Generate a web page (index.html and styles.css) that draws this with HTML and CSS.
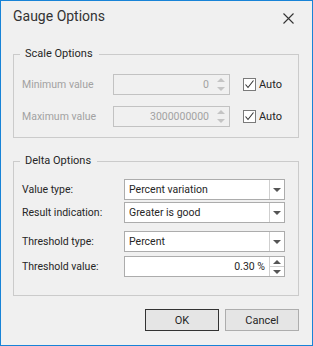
FILE: index.html
```html
<!DOCTYPE html>
<html lang="en">
<head>
    <meta charset="UTF-8">
    <title>Gauge Options</title>
    <link rel="stylesheet" href="styles.css">
</head>
<body>
    <div class="dialog">
        <div class="titlebar">
            <span class="title">Gauge Options</span>
            <svg class="close" width="11" height="11" viewBox="0 0 11 11">
                <path d="M0.5 0.5 L10.5 10.5 M10.5 0.5 L0.5 10.5" stroke="#333" stroke-width="1.1" fill="none"/>
            </svg>
        </div>

        <fieldset class="group">
            <legend>Scale Options</legend>
            <div class="scale-row">
                <span class="row-label disabled">Minimum value</span>
                <div class="spin-edit disabled">
                    <span class="value">0</span>
                    <span class="spin"><i class="tri-up"></i><i class="tri-down"></i></span>
                </div>
                <label class="check"><span class="box"><svg width="11" height="11" viewBox="0 0 11 11"><path d="M1.5 5.5 L4 8.5 L9.5 1.5" stroke="#333" stroke-width="1.1" fill="none"/></svg></span>Auto</label>
            </div>
            <div class="scale-row">
                <span class="row-label disabled">Maximum value</span>
                <div class="spin-edit disabled">
                    <span class="value">3000000000</span>
                    <span class="spin"><i class="tri-up"></i><i class="tri-down"></i></span>
                </div>
                <label class="check"><span class="box"><svg width="11" height="11" viewBox="0 0 11 11"><path d="M1.5 5.5 L4 8.5 L9.5 1.5" stroke="#333" stroke-width="1.1" fill="none"/></svg></span>Auto</label>
            </div>
        </fieldset>

        <fieldset class="group delta">
            <legend>Delta Options</legend>
            <div class="delta-row">
                <span class="row-label">Value type:</span>
                <div class="combo"><span class="text">Percent variation</span><span class="drop"><i class="tri-down"></i></span></div>
            </div>
            <div class="delta-row">
                <span class="row-label">Result indication:</span>
                <div class="combo"><span class="text">Greater is good</span><span class="drop"><i class="tri-down"></i></span></div>
            </div>
            <div class="delta-row gap-lg">
                <span class="row-label">Threshold type:</span>
                <div class="combo"><span class="text">Percent</span><span class="drop"><i class="tri-down"></i></span></div>
            </div>
            <div class="delta-row gap-md">
                <span class="row-label">Threshold value:</span>
                <div class="spin-edit">
                    <span class="value">0.30 %</span>
                    <span class="spin split"><span class="half"><i class="tri-up"></i></span><span class="half"><i class="tri-down"></i></span></span>
                </div>
            </div>
        </fieldset>

        <div class="footer">
            <button class="btn default">OK</button>
            <button class="btn">Cancel</button>
        </div>
    </div>
</body>
</html>
```

FILE: styles.css
```css
* {
    margin: 0;
    padding: 0;
    box-sizing: border-box;
}

body {
    width: 313px;
    height: 346px;
    background: #f0f0f0;
    font-family: Roboto, "Noto Sans", sans-serif;
    font-size: 10.5px;
    color: #262626;
}

.dialog {
    height: 346px;
    border: 1px solid #1883d7;
    display: flex;
    flex-direction: column;
}

.titlebar {
    height: 45px;
    display: flex;
    justify-content: space-between;
    align-items: flex-start;
    padding: 5px 18px 0 12px;
}

.title {
    font-size: 14px;
    line-height: 20px;
    color: #333;
}

.close {
    margin-top: 7px;
}

.group {
    margin: 0 13px 0 12px;
    border: 1px solid #cbcbcb;
    padding: 0 8px 10px;
}

.group legend {
    margin-left: -2px;
    padding: 0 6px 0 5px;
    font-size: 11px;
    line-height: 16px;
    color: #262626;
}

.group.delta {
    margin-top: 15px;
    padding-bottom: 18px;
}

.scale-row {
    display: grid;
    grid-template-columns: 91px 117px auto;
    align-items: center;
    height: 21px;
    margin-top: 11px;
}

.scale-row:first-of-type {
    margin-top: 12px;
}

.row-label.disabled {
    color: #a2a2a2;
}

.spin-edit {
    height: 21px;
    display: flex;
    border: 1px solid #acacac;
    background: #fff;
}

.spin-edit.disabled {
    background: #f0f0f0;
    border-color: #c2c2c2;
    color: #a2a2a2;
}

.spin-edit .value {
    flex: 1;
    text-align: right;
    line-height: 19px;
    padding-right: 4px;
}

.spin {
    width: 16px;
    display: flex;
    flex-direction: column;
    justify-content: center;
    align-items: center;
    gap: 5px;
}

.spin.split {
    width: 15px;
    border-left: 1px solid #cfcfcf;
    gap: 0;
}

.spin .half {
    flex: 1;
    width: 100%;
    display: flex;
    align-items: center;
    justify-content: center;
}

.spin .half:first-child {
    border-bottom: 1px solid #cfcfcf;
}

.tri-up,
.tri-down {
    display: block;
    width: 0;
    height: 0;
    border-left: 4px solid transparent;
    border-right: 4px solid transparent;
}

.tri-up {
    border-bottom: 4px solid #555;
}

.tri-down {
    border-top: 4px solid #555;
}

.spin-edit.disabled .tri-up {
    border-bottom-color: #c4c4c4;
}

.spin-edit.disabled .tri-down {
    border-top-color: #c4c4c4;
}

.check {
    display: flex;
    align-items: center;
    gap: 3px;
    margin-left: 13px;
    font-size: 11px;
}

.check .box {
    width: 13px;
    height: 13px;
    border: 1px solid #7a7a7a;
    background: #fff;
    display: flex;
    align-items: center;
    justify-content: center;
}

.delta-row {
    display: grid;
    grid-template-columns: 102px 161px;
    align-items: center;
    height: 21px;
    margin-top: 2px;
}

.delta-row:first-of-type {
    margin-top: 10px;
}

.delta-row.gap-lg {
    margin-top: 8px;
}

.delta-row.gap-md {
    margin-top: 4px;
}

.combo {
    height: 21px;
    display: flex;
    border: 1px solid #acacac;
    background: #fff;
}

.combo .text {
    flex: 1;
    line-height: 19px;
    padding-left: 4px;
}

.combo .drop {
    width: 15px;
    border-left: 1px solid #cfcfcf;
    display: flex;
    align-items: center;
    justify-content: center;
}

.footer {
    display: flex;
    justify-content: flex-end;
    gap: 6px;
    margin-top: 13px;
    padding-right: 13px;
}

.btn {
    width: 74px;
    height: 22px;
    font-family: inherit;
    font-size: 11px;
    color: #262626;
    background: #e5e5e5;
    border: 1px solid #adadad;
}

.btn.default {
    border-color: #333;
}
```
